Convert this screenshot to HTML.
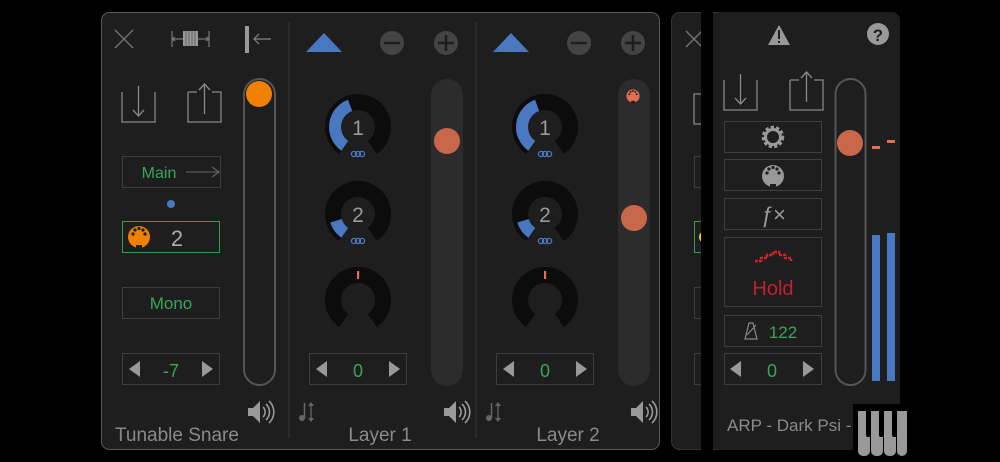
<!DOCTYPE html>
<html><head><meta charset="utf-8"><style>
html,body{margin:0;padding:0;background:#000;width:1000px;height:462px;overflow:hidden}
svg{display:block}
text{font-family:"Liberation Sans",sans-serif}
</style></head><body>
<svg width="1000" height="462" viewBox="0 0 1000 462" xmlns="http://www.w3.org/2000/svg">
<defs>
<g id="midi"><circle r="11"/><circle cx="-6" cy="-3" r="1.6" fill="#1e1e1e"/><circle cx="-4" cy="-7" r="1.6" fill="#1e1e1e"/><circle cx="0" cy="-8.5" r="1.6" fill="#1e1e1e"/><circle cx="4" cy="-7" r="1.6" fill="#1e1e1e"/><circle cx="6" cy="-3" r="1.6" fill="#1e1e1e"/><rect x="-3" y="8" width="6" height="4" fill="#1e1e1e"/></g>
<g id="spk" fill="#999"><path d="M-10,-4h5l7,-7v22l-7,-7h-5z"/><path d="M5,-5a7,7 0 0 1 0,10M8,-8a11,11 0 0 1 0,16M11,-11a15,15 0 0 1 0,22" fill="none" stroke="#999" stroke-width="1.6"/></g>
<g id="note" fill="#666" stroke="#666"><circle cx="-5" cy="6" r="3" stroke="none"/><line x1="-2.5" y1="6" x2="-2.5" y2="-9" stroke-width="1.5"/><line x1="4" y1="-8" x2="4" y2="8" stroke-width="1.3"/><path d="M1,-6l3,-4 3,4zM1,6l3,4 3,-4z" stroke="none"/></g>
<g id="dl" fill="none" stroke="#888" stroke-width="1.3"><path d="M0,0v30h33v-30"/><path d="M16.5,-6v30M11,18l5.5,6 5.5,-6"/></g>
<g id="ul" fill="none" stroke="#888" stroke-width="1.3"><path d="M0,0v30h33v-30h-9M9,0h-9"/><path d="M16.5,-8v30M11,-2l5.5,-6 5.5,6"/></g>
<g id="knobring"><path d="M-18.9,27 A33,33 0 1 1 18.9,27 L9.7,13.9 A17,17 0 1 0 -9.7,13.9 Z" fill="#0c0c0c"/></g>
<g id="link" fill="none" stroke="#4a78c0" stroke-width="1.3"><circle cx="-4" r="2.6"/><circle cx="0" r="2.6"/><circle cx="4" r="2.6"/></g>
</defs>

<rect x="101.5" y="12.5" width="558" height="437" rx="8" fill="#1e1e1e" stroke="#5a5a5a"/>
<line x1="289" y1="22" x2="289" y2="438" stroke="#383838"/>
<line x1="476" y1="22" x2="476" y2="438" stroke="#383838"/>

<path d="M115,30l18,18M133,30l-18,18" stroke="#777" stroke-width="1.3"/>
<g stroke="#777" stroke-width="1.2" fill="none"><path d="M172,31v16M209,31v16M172,39h37M175,37l-3,2 3,2M206,37l3,2-3,2"/></g>
<rect x="183" y="31" width="15" height="15" fill="#999"/>
<path d="M186,31v15M189,31v15M192,31v15M195,31v15" stroke="#555" stroke-width="0.8"/>
<rect x="245" y="26" width="4" height="27" fill="#999"/>
<path d="M254,39h17M259,34l-5,5 5,5" stroke="#888" stroke-width="1.2" fill="none"/>

<use href="#dl" x="122" y="92"/>
<use href="#ul" x="188" y="92"/>

<rect x="122.5" y="156.5" width="98" height="31" fill="none" stroke="#3e3e3e"/>
<text x="159" y="178" font-size="16" fill="#3aa55a" text-anchor="middle">Main</text>
<path d="M186,172h33M212,167l7,5-7,5" stroke="#666" fill="none" stroke-width="1.1"/>
<circle cx="171" cy="204" r="4" fill="#4a78c0"/>
<rect x="122.5" y="221.5" width="97" height="31" fill="none" stroke="#3a9a50"/>
<use href="#midi" x="139" y="237" fill="#f08000"/>
<text x="177" y="246" font-size="22" fill="#aaa" text-anchor="middle">2</text>
<rect x="122.5" y="287.5" width="97" height="31" fill="none" stroke="#3e3e3e"/>
<text x="171" y="309" font-size="17" fill="#3aa55a" text-anchor="middle">Mono</text>
<rect x="122.5" y="353.5" width="97" height="31" fill="none" stroke="#3e3e3e"/>
<path d="M140,361v16l-11,-8z M202,361v16l11,-8z" fill="#999"/>
<text x="171" y="377" font-size="18" fill="#3aa55a" text-anchor="middle">-7</text>

<rect x="244" y="79" width="31" height="306" rx="15.5" fill="none" stroke="#555" stroke-width="2"/>
<circle cx="259" cy="94" r="13" fill="#f08000"/>
<use href="#spk" x="258" y="412"/>
<text x="115" y="441" font-size="19" fill="#8a8a8a">Tunable Snare</text>

<g id="layer">
<path d="M306,52L324,33L342,52Z" fill="#4a78c0"/>
<circle cx="392" cy="43" r="12" fill="#444"/><path d="M384,43h16" stroke="#1e1e1e" stroke-width="2.5"/>
<circle cx="446" cy="43" r="12" fill="#444"/><path d="M438,43h16M446,35v16" stroke="#1e1e1e" stroke-width="2.5"/>

<use href="#knobring" x="358" y="127"/>
<path d="M344.8,145.8 A23,23 0 0 1 350.1,105.4" fill="none" stroke="#4a78c0" stroke-width="12"/>
<text x="358" y="135" font-size="21" fill="#999" text-anchor="middle">1</text>
<use href="#link" x="358" y="154"/>

<use href="#knobring" x="358" y="214"/>
<path d="M344.8,232.8 A23,23 0 0 1 336,220.7" fill="none" stroke="#4a78c0" stroke-width="12"/>
<text x="358" y="222" font-size="21" fill="#999" text-anchor="middle">2</text>
<use href="#link" x="358" y="241"/>

<use href="#knobring" x="358" y="300"/>
<rect x="357" y="271" width="2.2" height="8" fill="#e07050"/>

<rect x="309.5" y="353.5" width="97" height="31" fill="none" stroke="#3e3e3e"/>
<path d="M327,361v16l-11,-8z M389,361v16l11,-8z" fill="#999"/>
<text x="358" y="377" font-size="18" fill="#3aa55a" text-anchor="middle">0</text>
<use href="#note" x="307" y="412"/>
<use href="#spk" x="454" y="412"/>
</g>
<rect x="431" y="79" width="32" height="307" rx="16" fill="#2c2c2c"/>
<circle cx="447" cy="141" r="13" fill="#c8674a"/>
<text x="380" y="441" font-size="19" fill="#8a8a8a" text-anchor="middle">Layer 1</text>

<use href="#layer" x="187" y="0"/>
<rect x="618" y="79" width="32" height="307" rx="16" fill="#2c2c2c"/>
<circle cx="634" cy="218" r="13" fill="#c8674a"/>
<use href="#midi" x="633" y="96" fill="#e07050" transform="translate(633 96) scale(0.6) translate(-633 -96)"/>
<text x="568" y="441" font-size="19" fill="#8a8a8a" text-anchor="middle">Layer 2</text>

<rect x="671.5" y="12.5" width="60" height="437" rx="8" fill="#1e1e1e" stroke="#333"/>
<path d="M686,31l16,16M702,31l-16,16" stroke="#777" stroke-width="1.3"/>
<path d="M704,94h-10v30h10" stroke="#888" fill="none" stroke-width="1.3"/>
<rect x="694.5" y="156.5" width="30" height="31" fill="none" stroke="#3e3e3e"/>
<rect x="694.5" y="221.5" width="30" height="31" fill="none" stroke="#3a9a50"/>
<circle cx="705" cy="237" r="6" fill="#e8d000"/>
<rect x="694.5" y="287.5" width="30" height="31" fill="none" stroke="#3e3e3e"/>
<rect x="694.5" y="353.5" width="30" height="31" fill="none" stroke="#3e3e3e"/>
<rect x="701" y="0" width="12" height="462" fill="#000"/>

<rect x="713" y="12" width="187" height="438" rx="8" fill="#1e1e1e"/>
<path d="M779,25L790,45H768Z" fill="#999"/>
<rect x="778" y="30" width="2" height="9" fill="#1e1e1e"/><rect x="778" y="41" width="2" height="2" fill="#1e1e1e"/>
<circle cx="878" cy="34" r="11" fill="#999"/>
<text x="878" y="41" font-size="17" font-weight="bold" fill="#1e1e1e" text-anchor="middle">?</text>
<use href="#dl" x="724" y="80"/>
<use href="#ul" x="790" y="80"/>
<g fill="none" stroke="#3e3e3e">
<rect x="724.5" y="121.5" width="97" height="31"/>
<rect x="724.5" y="159.5" width="97" height="31"/>
<rect x="724.5" y="198.5" width="97" height="31"/>
<rect x="724.5" y="237.5" width="97" height="69"/>
<rect x="724.5" y="315.5" width="97" height="31"/>
<rect x="724.5" y="353.5" width="97" height="31"/>
</g>
<circle cx="773" cy="137" r="9" fill="none" stroke="#999" stroke-width="4.5" stroke-dasharray="3 2"/>
<circle cx="773" cy="137" r="7.5" fill="none" stroke="#999" stroke-width="3"/>
<use href="#midi" x="773" y="176" fill="#999"/>
<text x="773" y="222" font-size="22" font-style="italic" fill="#999" text-anchor="middle">ƒ×</text>
<path d="M755,261h6v-3h6v-3h6v-3h6v3h6v3h6v3" fill="none" stroke="#d02030" stroke-width="2.5" stroke-dasharray="3 1"/>
<text x="773" y="295" font-size="20" fill="#c02030" text-anchor="middle">Hold</text>
<path d="M745,339l4,-16h4l4,16z M747,335l9,-10" fill="none" stroke="#888" stroke-width="1.2"/>
<text x="783" y="338" font-size="17" fill="#3aa55a" text-anchor="middle">122</text>
<path d="M741,361v16l-11,-8z M803,361v16l11,-8z" fill="#999"/>
<text x="772" y="377" font-size="18" fill="#3aa55a" text-anchor="middle">0</text>
<rect x="835.5" y="79" width="30" height="306" rx="15" fill="none" stroke="#555" stroke-width="2"/>
<circle cx="850" cy="143" r="13" fill="#c8674a"/>
<rect x="872" y="146" width="8" height="3" fill="#e07050"/>
<rect x="887" y="140" width="8" height="3" fill="#e07050"/>
<rect x="872" y="235" width="8" height="146" fill="#4a78c0"/>
<rect x="887" y="233" width="8" height="148" fill="#4a78c0"/>
<text x="727" y="431" font-size="17" fill="#8a8a8a">ARP - Dark Psi -</text>
<rect x="853" y="404" width="58" height="58" fill="#000"/>
<g fill="#999">
<rect x="858" y="411" width="12" height="45" rx="5"/><rect x="871" y="411" width="12" height="45" rx="5"/>
<rect x="884" y="411" width="12" height="45" rx="5"/><rect x="897" y="411" width="10" height="45" rx="5"/>
<rect x="858" y="411" width="49" height="25"/>
</g>
<g fill="#000"><rect x="866" y="408" width="5" height="29" rx="2"/><rect x="879" y="408" width="5" height="29" rx="2"/><rect x="892" y="408" width="5" height="29" rx="2"/></g>
</svg>
</body></html>
